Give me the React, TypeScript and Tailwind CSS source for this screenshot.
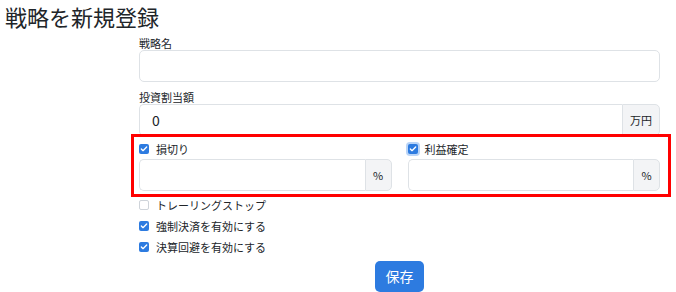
import { Check } from 'lucide-react';

const FONT = { fontFamily: '"Noto Sans CJK JP", "Noto Sans", sans-serif' };

function Box({ checked, focus }: { checked: boolean; focus?: boolean }) {
  return (
    <span
      className={
        'flex h-[10px] w-[10px] shrink-0 items-center justify-center rounded-[2px] ' +
        (checked ? 'bg-[#2d7be0]' : 'border border-[#cfd4da] bg-white') +
        (focus ? ' ring-[2px] ring-[#b9d4f7]' : '')
      }
    >
      {checked && <Check className="h-[8px] w-[8px] text-white" strokeWidth={4} />}
    </span>
  );
}

function CheckRow({ label, checked, focus }: { label: string; checked: boolean; focus?: boolean }) {
  return (
    <div className="flex h-[21px] items-center gap-[7px] text-[11px] text-[#212529]">
      <Box checked={checked} focus={focus} />
      <span className="leading-[14px]">{label}</span>
    </div>
  );
}

function Addon({ text, w }: { text: string; w: string }) {
  return (
    <div
      className={`flex h-full ${w} items-center justify-center rounded-r-[5px] border border-[#dee2e6] bg-[#f3f4f6] text-[11px] text-[#212529]`}
    >
      {text}
    </div>
  );
}

export default function App() {
  return (
    <div className="relative h-[292px] w-[676px] overflow-hidden bg-white text-[#212529]" style={FONT}>
      {/* Title */}
      <h1 className="h-[32px] pl-[5px] text-[22px] font-normal leading-[32px]">戦略を新規登録</h1>

      <div className="ml-[139px] w-[521px]">
        <div className="mt-[4px] h-[14px] text-[11px] leading-[14px]">戦略名</div>
        <div className="h-[32px] rounded-[5px] border border-[#dee2e6] bg-white" />

        <div className="mt-[8px] h-[14px] text-[11px] leading-[14px]">投資割当額</div>
        <div className="flex h-[32px]">
          <div className="flex flex-1 items-center rounded-l-[5px] border border-r-0 border-[#dee2e6] pl-[12px] text-[14px]">
            0
          </div>
          <Addon text="万円" w="w-[38px]" />
        </div>

        {/* Stop loss / take profit */}
        <div className="grid grid-cols-2 gap-x-[16px]">
          {[
            { label: '損切り', focus: false },
            { label: '利益確定', focus: true },
          ].map((c) => (
            <div key={c.label}>
              <div className="mt-[6px] flex h-[14px] items-center gap-[7px] text-[11px]">
                <Box checked focus={c.focus} />
                <span className="leading-[14px]">{c.label}</span>
              </div>
              <div className="mt-[3px] flex h-[32px]">
                <div className="flex-1 rounded-l-[5px] border border-r-0 border-[#dee2e6]" />
                <Addon text="%" w="w-[27px]" />
              </div>
            </div>
          ))}
        </div>

        <div className="mt-[3px]">
          <CheckRow label="トレーリングストップ" checked={false} />
          <CheckRow label="強制決済を有効にする" checked />
          <CheckRow label="決算回避を有効にする" checked />
        </div>

        <div className="mt-[4px] flex justify-center">
          <button className="h-[31px] w-[49px] rounded-[5px] bg-[#2d7be0] text-[14px] text-white">保存</button>
        </div>
      </div>

      {/* Red annotation box */}
      <div className="absolute left-[131px] top-[134px] h-[63px] w-[540px] border-[3px] border-[#ff0000]" />
    </div>
  );
}
